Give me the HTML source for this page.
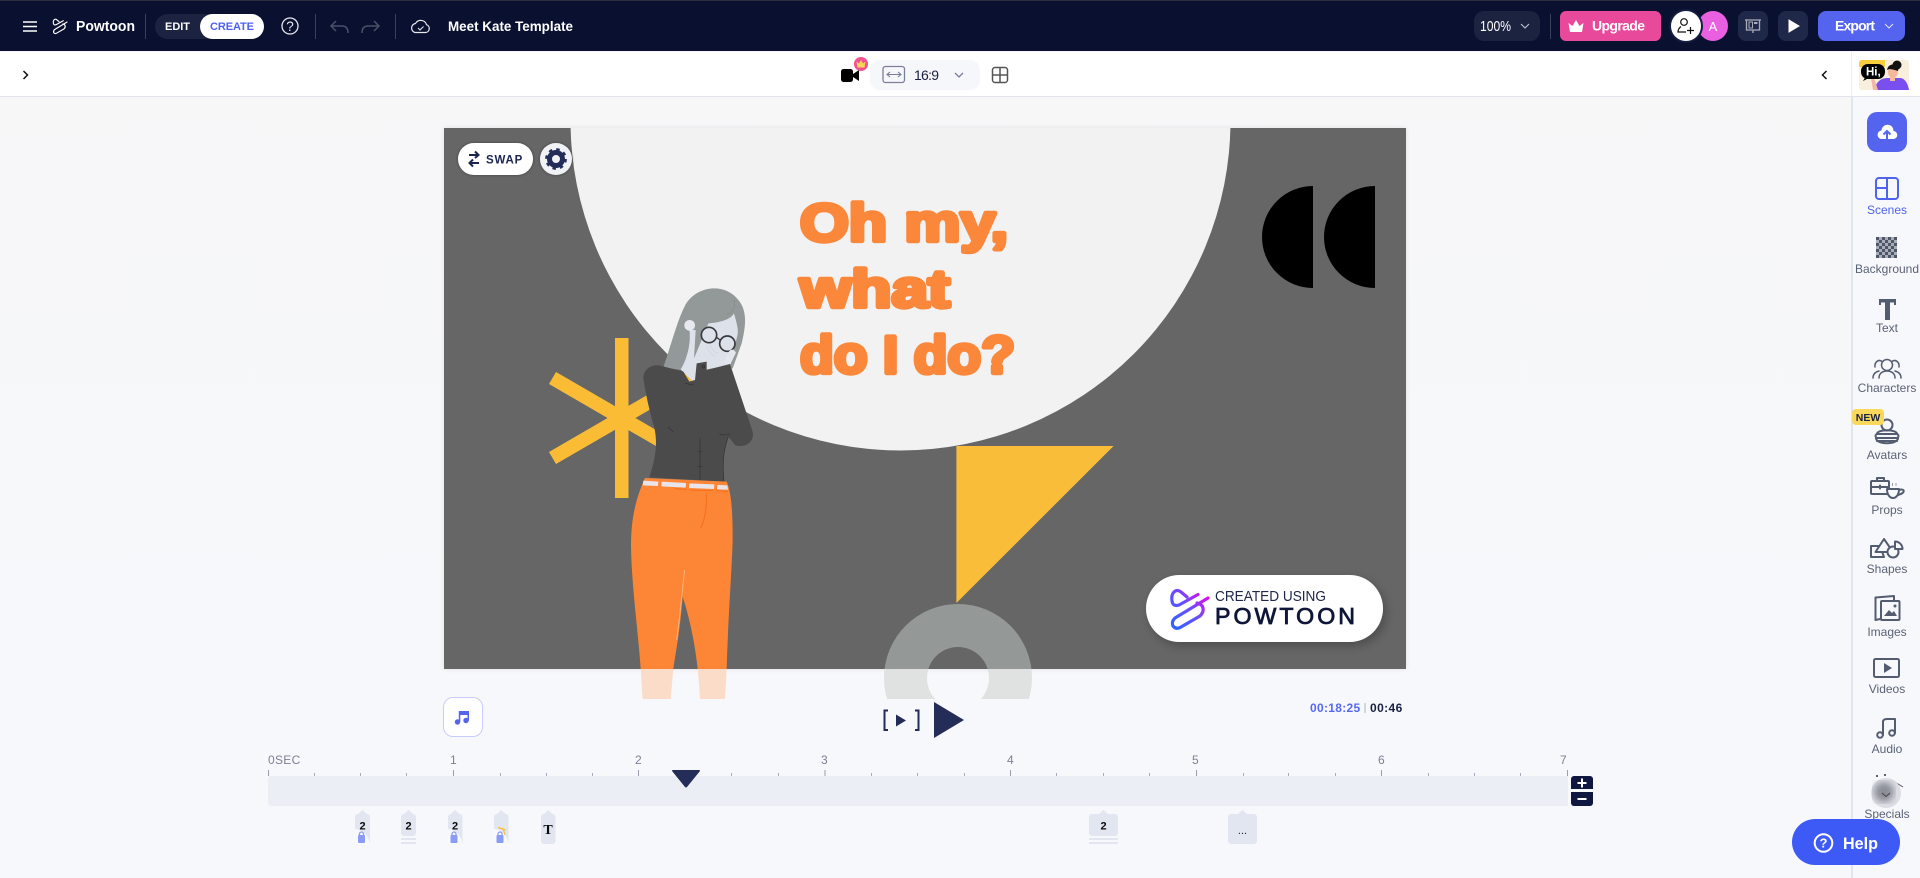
<!DOCTYPE html>
<html><head><meta charset="utf-8"><title>Powtoon</title>
<style>
html,body{margin:0;padding:0;width:1920px;height:878px;overflow:hidden;background:#f7f8fb}
svg{display:block;font-family:"Liberation Sans",sans-serif}
.l{font-size:12px;fill:#5a6275;text-anchor:middle}
.i{fill:none;stroke:#545c70;stroke-width:2;stroke-linecap:round;stroke-linejoin:round}
.r{font-size:12px;fill:#7d8095;letter-spacing:.3px}
.m{fill:#e1e6f0}
.n{font-size:11px;font-weight:bold;fill:#0b0b0b;text-anchor:middle}
</style></head><body>
<svg width="1920" height="878" viewBox="0 0 1920 878" xmlns="http://www.w3.org/2000/svg">
<defs>
<linearGradient id="bg" x1="0" y1="0" x2="0" y2="1"><stop offset="0" stop-color="#f7f7f8"/><stop offset="1" stop-color="#f7f8fc"/></linearGradient>
<linearGradient id="lg" gradientUnits="userSpaceOnUse" x1="1171" y1="625" x2="1209" y2="592"><stop offset="0" stop-color="#2f62ff"/><stop offset=".5" stop-color="#6a4dff"/><stop offset="1" stop-color="#f200e6"/></linearGradient>
<pattern id="chk" width="6" height="6" patternUnits="userSpaceOnUse" x="1876" y="237"><rect width="6" height="6" fill="#a9adb8"/><rect width="3" height="3" fill="#4e5668"/><rect x="3" y="3" width="3" height="3" fill="#4e5668"/></pattern>
<clipPath id="st"><rect x="444" y="128" width="962" height="541"/></clipPath>
<clipPath id="below"><rect x="444" y="669" width="962" height="30"/></clipPath>
<filter id="sh" x="-20%" y="-30%" width="140%" height="170%"><feDropShadow dx="3" dy="4" stdDeviation="5" flood-color="#000" flood-opacity=".25"/></filter>
<filter id="gl" x="-20%" y="-30%" width="140%" height="160%"><feDropShadow dx="0" dy="0" stdDeviation="1.500" flood-color="#000" flood-opacity=".35"/></filter>
<filter id="bl"><feGaussianBlur stdDeviation="3.500"/></filter>
<filter id="ss" x="-5%" y="-5%" width="110%" height="110%"><feDropShadow dx="0" dy="0" stdDeviation="2" flood-color="#000" flood-opacity=".1"/></filter>
</defs>

<!-- page background -->
<rect width="1920" height="878" fill="url(#bg)"/>

<!-- stage -->
<rect x="444" y="128" width="962" height="541" fill="#666" filter="url(#ss)"/>
<g clip-path="url(#st)">
<circle cx="900.500" cy="120.500" r="330" fill="#f2f2f2"/>
<polygon points="956.400,446 1113.600,446 956.400,603" fill="#f9bd3a"/>
<path d="M884,678a74,74 0 0 1 148,0 74,74 0 0 1-148,0ZM927,678a31,31 0 0 0 62,0 31,31 0 0 0-62,0Z" fill="#949998" fill-rule="evenodd"/>
<path d="M1313,186a51,51 0 0 0 0,102Z" fill="#000"/>
<path d="M1375,186a51,51 0 0 0 0,102Z" fill="#000"/>
<!-- asterisk -->
<rect x="615" y="338" width="13.500" height="160" fill="#fbbc35"/>
<path d="M552.500,378L690.500,458M552.500,458L690.500,378" stroke="#fbbc35" stroke-width="14" fill="none"/>
</g>

<!-- headline -->
<g fill="#fb873a" stroke="#fb873a" stroke-width="4.400" stroke-linejoin="round" font-weight="bold" font-size="53">
<text x="800" y="241" textLength="208" lengthAdjust="spacingAndGlyphs">Oh my,</text>
<text x="800" y="307" textLength="150" lengthAdjust="spacingAndGlyphs">what</text>
<text x="800" y="373" textLength="215" lengthAdjust="spacingAndGlyphs">do I do?</text>
</g>

<!-- character -->
<g transform="translate(530 280) scale(.33333)">
<path d="M400,262C425,190 445,110 470,68C510,12 590,12 625,60C650,90 650,130 635,190L608,265L520,280Z" fill="#939998"/>
<path d="M535,130C560,128 600,122 612,100C622,135 626,150 622,168L600,255L530,268L490,306L452,268C470,240 484,190 478,150L497,150L492,235L515,180Z" fill="#dde1ea"/>
<circle cx="479" cy="136" r="16" fill="#e6e9f0"/>
<circle cx="537" cy="165" r="23" fill="#dde1ea" stroke="#3a3a3e" stroke-width="5"/>
<path d="M560,172L570,180" stroke="#3a3a3e" stroke-width="4"/>
<circle cx="592" cy="191" r="23" fill="#dde1ea" stroke="#3a3a3e" stroke-width="5"/>
<path d="M597,214C604,206 612,208 618,218L600,255L582,245Z" fill="#e3e6ee"/>
<path d="M530,200C535,215 545,225 555,230M540,195C545,208 555,218 565,220" fill="none" stroke="#cfd3de" stroke-width="2"/>
<path d="M612,60C618,80 610,98 590,104" fill="none" stroke="#868b8a" stroke-width="2"/>
<path d="M340,295C340,265 370,250 395,258L460,275L478,305L495,300L500,250L530,245L530,270L600,252L668,455C675,490 640,505 615,495L595,470C585,500 575,530 582,605L358,592C375,540 385,490 372,440C355,380 345,330 340,295Z" fill="#4b4b4b"/>
<path d="M510,475V600M503,515H518M503,560H518M568,462C580,466 590,466 600,462M595,470C585,500 575,530 582,605M414,440C420,448 425,452 430,456M465,310L490,315" fill="none" stroke="#333" stroke-width="2"/>
<circle cx="520" cy="260" r="4" fill="none" stroke="#2d2d2d" stroke-width="2"/>
</g>
<!-- pants on stage -->
<g clip-path="url(#st)"><g transform="translate(530 280) scale(.33333)">
<path d="M345,594L590,605C605,640 608,700 608,780C605,880 595,1000 590,1166L585,1260L510,1260C505,1150 490,1050 458,950C450,1050 440,1100 430,1166L422,1260L338,1260L332,1166C325,1060 305,920 303,800C303,720 315,660 345,594Z" fill="#fd8636"/>
<path d="M340,602L385,605L384,618L338,616ZM395,605L468,609L467,623L394,619ZM478,610L553,613L552,627L477,624ZM562,615L592,616L594,629L561,628Z" fill="#e9e4ea"/>
<path d="M435,626L470,628M478,630L550,632M560,632L594,635M530,640C530,680 525,720 512,745" fill="none" stroke="#f2701c" stroke-width="3"/>
<path d="M464,870C455,950 448,1020 440,1080" fill="none" stroke="#fdb27a" stroke-width="3"/>
</g></g>
<!-- overflow below stage (translucent) -->
<g clip-path="url(#below)">
<g transform="translate(530 280) scale(.33333)"><path d="M345,594L590,605C605,640 608,700 608,780C605,880 595,1000 590,1166L585,1260L510,1260C505,1150 490,1050 458,950C450,1050 440,1100 430,1166L422,1260L338,1260L332,1166C325,1060 305,920 303,800C303,720 315,660 345,594Z" fill="#fbdcc8"/></g>
<path d="M884,678a74,74 0 0 1 148,0 74,74 0 0 1-148,0ZM927,678a31,31 0 0 0 62,0 31,31 0 0 0-62,0Z" fill="#e0e2e1" fill-rule="evenodd"/>
</g>

<!-- swap + gear -->
<rect x="458" y="143" width="75" height="32" rx="16" fill="#fff" filter="url(#gl)"/>
<path d="M469,155H478M475,151.500L478.500,155L475,158M479,163H470M473,159.500L469.500,163L473,166.500" fill="none" stroke="#1b2550" stroke-width="2"/>
<text x="486" y="163.500" font-size="11.500" font-weight="bold" fill="#1b2550" letter-spacing=".8">SWAP</text>
<circle cx="556" cy="159" r="16" fill="#f1f2f5" filter="url(#gl)"/>
<g fill="none" stroke="#232d58"><circle cx="556" cy="159" r="6.500" stroke-width="5"/><circle cx="556" cy="159" r="9.300" stroke-width="3.200" stroke-dasharray="3.300 4"/></g>

<!-- created using badge -->
<rect x="1146" y="575" width="237" height="67" rx="33.500" fill="#fff" filter="url(#sh)"/>
<g fill="none" stroke="url(#lg)" stroke-width="3.200" stroke-linecap="round" stroke-linejoin="round">
<path d="M1187,597L1181,592Q1177,589 1174,592Q1171,595 1172,601Q1173,607 1179,605L1198,594.500"/>
<path d="M1208,598L1175,618Q1171,622 1173,626Q1176,630 1181,627L1200,616Q1204,612 1203,608Q1202,604 1197,603"/>
</g>
<text x="1215" y="601" font-size="14.500" fill="#20284a" textLength="111" lengthAdjust="spacingAndGlyphs">CREATED USING</text>
<text x="1215" y="624" font-size="23" stroke="#0f1638" stroke-width=".8" fill="#0f1638" letter-spacing="3" textLength="143" lengthAdjust="spacingAndGlyphs">POWTOON</text>

<!-- top header -->
<rect width="1920" height="51" fill="#0a1130"/>
<rect width="1920" height="1" fill="#2c2c3c"/>
<path d="M23,22H37M23,26.500H37M23,31H37" stroke="#fff" stroke-width="1.500"/>
<g fill="none" stroke="#fff" stroke-width="3" stroke-linecap="round" stroke-linejoin="round" transform="translate(53 19) scale(.38) translate(-1171 -590)">
<path d="M1187,597L1181,592Q1177,589 1174,592Q1171,595 1172,601Q1173,607 1179,605L1198,594.500"/>
<path d="M1208,598L1175,618Q1171,622 1173,626Q1176,630 1181,627L1200,616Q1204,612 1203,608Q1202,604 1197,603"/>
</g>
<text x="76" y="31" font-size="15" font-weight="bold" fill="#fff" textLength="59" lengthAdjust="spacingAndGlyphs">Powtoon</text>
<path d="M145.500,14V39M315.500,14V39M395.500,14V39" stroke="#3b415c" stroke-width="1"/>
<rect x="155" y="14" width="109" height="25" rx="12.500" fill="#1b2340"/>
<rect x="200" y="14" width="64" height="25" rx="12.500" fill="#fff"/>
<text x="165" y="30" font-size="11" font-weight="bold" fill="#fff" textLength="25">EDIT</text>
<text x="210" y="30" font-size="11" font-weight="bold" fill="#4f5ff0" textLength="44">CREATE</text>
<circle cx="290" cy="26" r="8" fill="none" stroke="#e8e9ef" stroke-width="1.300"/>
<text x="290" y="31" font-size="13.500" fill="#e8e9ef" text-anchor="middle">?</text>
<path d="M336,21L331,26L336,31M331,26H342Q348,26 348,33" fill="none" stroke="#4a5068" stroke-width="1.500"/>
<path d="M374,21L379,26L374,31M379,26H368Q362,26 362,33" fill="none" stroke="#4a5068" stroke-width="1.500"/>
<path d="M415,32.500H425.500a4,4 0 0 0 1,-7.800a6,6 0 0 0 -11,-1.200a4.600,4.600 0 0 0 -.5,9Z" fill="none" stroke="#e8e9ef" stroke-width="1.200"/>
<path d="M418,28L420,30L423.500,26.500" fill="none" stroke="#e8e9ef" stroke-width="1"/>
<text x="448" y="31" font-size="14" font-weight="bold" fill="#fff" textLength="125" lengthAdjust="spacingAndGlyphs">Meet Kate Template</text>

<rect x="1474" y="11" width="66" height="30" rx="10" fill="#1b2340"/>
<text x="1480" y="31" font-size="15" fill="#fff" textLength="31" lengthAdjust="spacingAndGlyphs">100%</text>
<path d="M1521,24L1525,28L1529,24" fill="none" stroke="#c6c9d4" stroke-width="1"/>
<path d="M1550.500,14V39" stroke="#3b415c"/>
<rect x="1560" y="11" width="101" height="30" rx="6" fill="#e8499a"/>
<path d="M1570,32H1582L1583.500,23L1579.500,26L1576,20L1572.500,26L1568.500,23Z" fill="#fff"/>
<text x="1592" y="30.500" font-size="14" font-weight="bold" fill="#fff" textLength="53">Upgrade</text>
<circle cx="1713" cy="26" r="15" fill="#e85fe0"/>
<text x="1713" y="31" font-size="13" fill="#fff" text-anchor="middle">A</text>
<circle cx="1686" cy="26" r="16" fill="#fff" stroke="#141c42" stroke-width="2"/>
<circle cx="1684" cy="22" r="3.300" fill="none" stroke="#111" stroke-width="1.200"/>
<path d="M1681,26.500C1679,28 1678,30 1678,32H1686M1687,30.500H1694M1690.500,27V34" fill="none" stroke="#111" stroke-width="1.200"/>
<rect x="1738" y="11" width="30" height="30" rx="8" fill="#20284a"/>
<path d="M1745,20H1761M1746.500,20V30H1759.500V20M1753,30V33" fill="none" stroke="#a9adbb" stroke-width="1.300"/>
<rect x="1749" y="22" width="3.500" height="6" fill="none" stroke="#a9adbb"/>
<rect x="1754" y="22" width="3.500" height="2" fill="#a9adbb"/>
<rect x="1778" y="11" width="30" height="30" rx="8" fill="#20284a"/>
<polygon points="1789,20 1799,26 1789,32" fill="#fff" stroke="#fff" stroke-width="1"/>
<rect x="1818" y="11" width="87" height="30" rx="8" fill="#5464ef"/>
<text x="1835" y="30.500" font-size="14" font-weight="bold" fill="#fff" textLength="40">Export</text>
<path d="M1885,24L1889,28L1893,24" fill="none" stroke="#dfe2fb" stroke-width="1"/>

<!-- toolbar row -->
<rect y="51" width="1920" height="45" fill="#fff"/>
<rect y="51" width="1920" height="1" fill="#f6f7fb"/>
<rect y="96" width="1920" height="1" fill="#e2e3ec"/>
<path d="M23.500,71L27.500,75L23.500,79" fill="none" stroke="#111" stroke-width="1.500"/>
<path d="M1826.500,71L1822.500,75L1826.500,79" fill="none" stroke="#111" stroke-width="1.500"/>
<!-- camera -->
<rect x="841" y="69" width="12" height="13" rx="2.500" fill="#000"/>
<polygon points="853,74 859,70 859,81 853,77" fill="#000"/>
<circle cx="861" cy="64" r="7" fill="#f1528f"/>
<path d="M857.500,67.500H864.500L865.500,61.500L863,63.500L861,60L859,63.500L856.500,61.500Z" fill="#f8d65a"/>
<rect x="870" y="60" width="110" height="30" rx="10" fill="#f6f7fa"/>
<rect x="883" y="66.500" width="21.500" height="16" rx="2.500" fill="none" stroke="#7a7f9a" stroke-width="1.300"/>
<path d="M887,74.500H901M890,72L887,74.500L890,77M898,72L901,74.500L898,77" fill="none" stroke="#7a7f9a" stroke-width="1.100"/>
<text x="914" y="80" font-size="14" fill="#1a2140" textLength="25">16:9</text>
<path d="M955,73L959,77L963,73" fill="none" stroke="#7a7f9a" stroke-width="1.300"/>
<rect x="992.500" y="67.500" width="15" height="15" rx="2.500" fill="none" stroke="#555" stroke-width="1.500"/>
<path d="M1000,67.500V82.500M992.500,75H1007.500" stroke="#555" stroke-width="1.500"/>

<!-- sidebar -->
<rect x="1853" y="97" width="67" height="781" fill="#f7f8fc"/>
<rect x="1851" y="97" width="2" height="781" fill="#e3e5ee"/>
<rect x="1851" y="52" width="1" height="44" fill="#eeeff4"/>
<!-- thumbnail -->
<rect x="1859" y="60" width="50" height="30" rx="3" fill="#f8efdd"/>
<path d="M1862,60H1885V67H1859V63a3,3 0 0 1 3,-3Z" fill="#f7cf3d"/>
<path d="M1874,90C1877,80 1882,78 1888,78H1900C1905,78 1908,84 1909,90Z" fill="#7a4ff0"/>
<path d="M1873,90L1871,78L1874,78L1878,90Z" fill="#f4b6a8"/>
<ellipse cx="1893" cy="72" rx="5" ry="6" fill="#f3b99a"/>
<rect x="1890" y="76" width="5" height="5" fill="#f3b99a"/>
<circle cx="1897" cy="65" r="4.500" fill="#111"/>
<path d="M1887,70C1888,64 1894,63 1899,66L1898,71C1894,70 1890,68 1887,70Z" fill="#111"/>
<rect x="1861" y="64" width="24" height="15" rx="7" fill="#000"/>
<path d="M1866,76L1863,81L1871,77Z" fill="#000"/>
<text x="1866" y="75.500" font-size="11.500" font-weight="bold" fill="#fff">Hi,</text>

<!-- upload -->
<rect x="1867" y="112" width="40" height="40" rx="10" fill="#5464ef"/>
<path d="M1881.500,139H1893a4,4 0 0 0 .5,-8a6,6 0 0 0 -12,-.5a4.300,4.300 0 0 0 -.5,8.500Z" fill="#fff"/>
<path d="M1887,139V131.500M1883.500,134.500L1887,131L1890.500,134.500" fill="none" stroke="#5464ef" stroke-width="2"/>
<!-- scenes -->
<g fill="none" stroke="#4f62f0" stroke-width="2"><rect x="1876" y="178" width="22" height="21" rx="3"/><path d="M1887,178V199M1876,188H1887"/></g>
<text x="1887" y="214" class="l" style="fill:#4f62f0">Scenes</text>
<!-- background -->
<rect x="1876" y="237" width="21" height="21" fill="url(#chk)"/>
<text x="1887" y="273" class="l">Background</text>
<!-- text -->
<path d="M1879,299H1896V305H1894V302.500H1890V320H1885V302.500H1881V305H1879Z" fill="#545c70"/>
<text x="1887" y="332" class="l">Text</text>
<!-- characters -->
<g class="i" style="stroke-width:1.500"><circle cx="1887" cy="365" r="5.500"/><path d="M1875,367a4.500,5.500 0 0 1 7,-5.500M1899,367a4.500,5.500 0 0 0 -7,-5.500"/><path d="M1879,378C1879,373 1883,371 1887,371C1891,371 1895,373 1895,378M1873,378C1873,374 1875,372 1879,371M1901,378C1901,374 1899,372 1895,371"/></g>
<text x="1887" y="392" class="l">Characters</text>
<!-- avatars -->
<g class="i"><circle cx="1887" cy="425" r="5.500"/><path d="M1877,434C1877,429 1897,429 1897,434"/><rect x="1875.500" y="434" width="23" height="4" rx="2"/><path d="M1876,438C1876,445 1898,445 1898,438M1877,441H1897"/></g>
<rect x="1852" y="409" width="32" height="16" rx="4" fill="#f9d85b"/>
<text x="1868" y="421" font-size="10.500" font-weight="bold" fill="#1b2340" text-anchor="middle">NEW</text>
<text x="1887" y="459" class="l">Avatars</text>
<!-- props -->
<g class="i"><rect x="1871" y="481" width="18" height="13" rx="1"/><path d="M1877,481V478H1884V481M1871,487H1889M1880,485.500V488.500"/><path d="M1887,489H1899C1899,495 1896,498 1893,498C1890,498 1887,495 1887,489ZM1899,490C1905,488 1906,493 1898,495" fill="#f7f8fc"/></g>
<path d="M1892.500,483V486M1896,483V486" stroke="#9aa0ae" stroke-width="1"/>
<text x="1887" y="514" class="l">Props</text>
<!-- shapes -->
<g class="i"><path d="M1871,546H1880L1884,557H1871Z"/><path d="M1875.500,552L1884,539L1893,552Z" fill="#f7f8fc"/><circle cx="1893" cy="552" r="5.500" fill="#f7f8fc"/><path d="M1895,549V541.500a7.500,7.500 0 0 1 7.500,7.500Z" fill="#f7f8fc"/></g>
<text x="1887" y="573" class="l">Shapes</text>
<!-- images -->
<g class="i"><path d="M1880,619L1875.500,620V597.500L1894,596V600"/><rect x="1881" y="601" width="18.500" height="19" rx="1"/></g>
<path d="M1884,616L1889,610L1892,613L1894,611L1897,616Z" fill="#545c70"/><circle cx="1895" cy="606" r="1.500" fill="#545c70"/>
<text x="1887" y="636" class="l">Images</text>
<!-- videos -->
<rect x="1874" y="659" width="25" height="18" rx="1.500" class="i"/>
<polygon points="1884,663 1892,668 1884,673" fill="#545c70"/>
<text x="1887" y="693" class="l">Videos</text>
<!-- audio -->
<g class="i"><circle cx="1880" cy="735" r="2.800"/><circle cx="1892" cy="733" r="2.800"/><path d="M1883,735V722C1883,719.500 1885,719 1887,719H1895V733"/></g>
<text x="1887" y="753" class="l">Audio</text>
<!-- specials -->
<circle cx="1877" cy="776" r="1" fill="#333"/><circle cx="1885" cy="775" r="1" fill="#333"/>
<path d="M1890,779L1903,787" stroke="#555" stroke-width="1"/>
<circle cx="1886" cy="793" r="15" fill="#dcdde4"/>
<circle cx="1884" cy="792" r="10" fill="#8b8e96" filter="url(#bl)"/>
<path d="M1882,793L1886,796.500L1890,793" fill="none" stroke="#444" stroke-width="1"/>
<text x="1887" y="818" class="l">Specials</text>
<!-- help -->
<rect x="1792" y="819" width="108" height="46" rx="23" fill="#3d5af7"/>
<circle cx="1823.500" cy="843" r="8.800" fill="none" stroke="#fff" stroke-width="2"/>
<text x="1823.500" y="847.500" font-size="13" font-weight="bold" fill="#fff" text-anchor="middle">?</text>
<text x="1843" y="849" font-size="16.500" font-weight="bold" fill="#fff" textLength="35" lengthAdjust="spacingAndGlyphs">Help</text>

<!-- player controls -->
<rect x="443.500" y="697.500" width="39" height="39" rx="9.500" fill="#fff" stroke="#c9ccfb"/>
<g fill="#5464ef"><circle cx="457.500" cy="722" r="2.700"/><circle cx="466" cy="720.500" r="2.700"/><path d="M458.800,722V711H469V720.500H467.500V715H460.300V722Z"/></g>
<path d="M888,710.500H884.500V730H888M915,710.500H918.500V730H915" fill="none" stroke="#232d58" stroke-width="2"/>
<polygon points="896,714.500 906,720.500 896,726.500" fill="#232d58"/>
<polygon points="934,702 964,720 934,738" fill="#232d58"/>
<text x="1310" y="712" font-size="12" font-weight="bold" fill="#5468f5" letter-spacing=".3">00:18:25</text>
<rect x="1364" y="703" width="2" height="10" fill="#d4d6de"/>
<text x="1370" y="712" font-size="12" font-weight="bold" fill="#1a2140" letter-spacing=".4">00:46</text>

<!-- ruler -->
<text x="268" y="764" class="r">0SEC</text>
<text x="450" y="764" class="r">1</text>
<text x="635" y="764" class="r">2</text>
<text x="821" y="764" class="r">3</text>
<text x="1007" y="764" class="r">4</text>
<text x="1192" y="764" class="r">5</text>
<text x="1378" y="764" class="r">6</text>
<text x="1560" y="764" class="r">7</text>
<path d="M268.500,770V776M453.500,770V776M638.500,770V776M825,770V776M1010.500,770V776M1196.500,770V776M1381.500,770V776M1567.500,770V776" stroke="#9a9db0" stroke-width="1"/>
<path d="M314.500,773V776M360.500,773V776M406.500,773V776M500.500,773V776M546.500,773V776M592.500,773V776M685.500,773V776M731.500,773V776M778.500,773V776M871.500,773V776M917.500,773V776M964.500,773V776M1056.500,773V776M1103.500,773V776M1149.500,773V776M1243.500,773V776M1288.500,773V776M1335.500,773V776M1428.500,773V776M1474.500,773V776M1520.500,773V776" stroke="#a8abbc" stroke-width="1"/>
<path d="M268,779a3,3 0 0 1 3,-3H1568V806H271a3,3 0 0 1 -3,-3Z" fill="#ebeef5"/>
<path d="M673,770H699a1,1 0 0 1 1,1L687,787a1.500,1.500 0 0 1 -2,0L672,771a1,1 0 0 1 1,-1Z" fill="#232d58"/>
<!-- zoom -->
<path d="M1571,789V779a3,3 0 0 1 3,-3H1590a3,3 0 0 1 3,3V789Z" fill="#0f1640"/>
<path d="M1571,792V803a3,3 0 0 0 3,3H1590a3,3 0 0 0 3,-3V792Z" fill="#0f1640"/>
<path d="M1577.500,783H1586.500M1582,778.500V787.500M1577.500,799H1586.500" stroke="#fff" stroke-width="2"/>

<!-- markers -->
<g>
<path class="m" d="M355,817a3,3 0 0 1 3,-3L362.500,810L367,814a3,3 0 0 1 3,3V844H355Z"/>
<path d="M355,829C364,830 369,837 370,844H355Z" fill="#f8f9fc"/>
<rect x="358" y="835" width="7" height="8" rx="1" fill="#8b9bf9"/><path d="M359.500,835V834a2,2 0 0 1 4,0V835" fill="none" stroke="#8b9bf9" stroke-width="1.300"/>
<text x="362.500" y="829.500" class="n">2</text>

<path class="m" d="M401,817a3,3 0 0 1 3,-3L408.500,810L413,814a3,3 0 0 1 3,3V833a3,3 0 0 1 -3,3H404a3,3 0 0 1 -3,-3Z"/>
<path class="m" d="M401,838H416V840H401ZM401,842H416V844H401Z"/>
<text x="408.500" y="829.500" class="n">2</text>

<path class="m" d="M448,817a3,3 0 0 1 3,-3L455,810L459.500,814a3,3 0 0 1 3,3V844H448Z"/>
<path d="M448,829C457,830 461.500,837 462.500,844H448Z" fill="#f8f9fc"/>
<rect x="450.500" y="835" width="7" height="8" rx="1" fill="#8b9bf9"/><path d="M452,835V834a2,2 0 0 1 4,0V835" fill="none" stroke="#8b9bf9" stroke-width="1.300"/>
<text x="455" y="829.500" class="n">2</text>

<path class="m" d="M494,817a3,3 0 0 1 3,-3L501,810L505.500,814a3,3 0 0 1 3,3V844H494Z"/>
<path d="M494,829C503,830 507.500,837 508.500,844H494Z" fill="#f8f9fc"/>
<rect x="496.500" y="835" width="7" height="8" rx="1" fill="#8b9bf9"/><path d="M498,835V834a2,2 0 0 1 4,0V835" fill="none" stroke="#8b9bf9" stroke-width="1.300"/>
<path d="M501.500,828L505,830M505,835L503.500,830M498,827.500L505.500,830" stroke="#f9bd3a" stroke-width="1.200"/>

<path class="m" d="M541,817a3,3 0 0 1 3,-3L548,810L552.500,814a3,3 0 0 1 3,3V841a3,3 0 0 1 -3,3H544a3,3 0 0 1 -3,-3Z"/>
<text x="548" y="834" font-size="14" font-weight="bold" fill="#0b0b0b" text-anchor="middle" style="font-family:'Liberation Serif',serif">T</text>

<path class="m" d="M1089,817a3,3 0 0 1 3,-3H1099L1103.500,810L1108,814H1115a3,3 0 0 1 3,3V833a3,3 0 0 1 -3,3H1092a3,3 0 0 1 -3,-3Z"/>
<path class="m" d="M1089,838H1118V840H1089ZM1089,842H1118V844H1089Z"/>
<text x="1103.500" y="829.500" class="n">2</text>

<path class="m" d="M1228,817a3,3 0 0 1 3,-3H1238L1242.500,810L1247,814H1254a3,3 0 0 1 3,3V841a3,3 0 0 1 -3,3H1231a3,3 0 0 1 -3,-3Z"/>
<text x="1242.500" y="834" font-size="11" fill="#1a2140" text-anchor="middle">...</text>
</g>
</svg>
</body></html>
